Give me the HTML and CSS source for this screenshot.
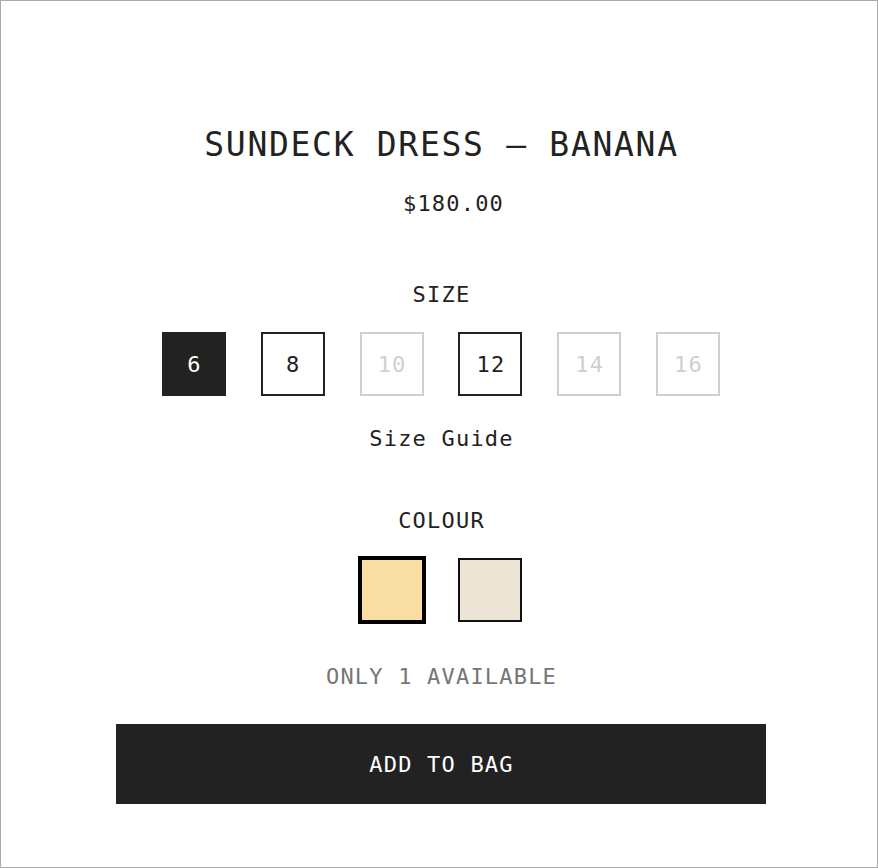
FILE: index.html
```html
<!DOCTYPE html>
<html lang="en">
<head>
<meta charset="utf-8">
<title>Sundeck Dress – Banana</title>
<link rel="stylesheet" href="styles.css">
</head>
<body>
<main class="product">
  <h1 class="title">SUNDECK DRESS – BANANA</h1>
  <p class="price">$180.00</p>

  <h2 class="label label-size">SIZE</h2>
  <div class="sizes">
    <button class="size is-selected">6</button>
    <button class="size">8</button>
    <button class="size is-disabled">10</button>
    <button class="size">12</button>
    <button class="size is-disabled">14</button>
    <button class="size is-disabled">16</button>
  </div>
  <a class="size-guide">Size Guide</a>

  <h2 class="label label-colour">COLOUR</h2>
  <div class="swatches">
    <button class="swatch swatch-banana is-selected" aria-label="Banana"></button>
    <button class="swatch swatch-sand" aria-label="Sand"></button>
  </div>

  <p class="stock">ONLY 1 AVAILABLE</p>
  <button class="add-to-bag">ADD TO BAG</button>
</main>
</body>
</html>
```
FILE: styles.css
```css
* { box-sizing: border-box; }

html, body { margin: 0; padding: 0; }

body {
  width: 878px;
  height: 868px;
  border: 1px solid #ababab;
  background: #fff;
  color: #222;
  font-family: "DejaVu Sans Mono", "Liberation Mono", monospace;
  font-size: 22px;
  line-height: 24px;
  letter-spacing: 1.2px;
}

.product {
  display: flex;
  flex-direction: column;
  align-items: center;
  padding: 126px 0 0 5px;
}

.title {
  margin: 0;
  font-size: 33px;
  line-height: 36px;
  font-weight: normal;
  letter-spacing: 1.7px;
}

.price {
  margin: 29px 0 0;
  padding-left: 24px;
}

.label {
  margin: 0;
  font-size: 22px;
  line-height: 24px;
  font-weight: normal;
}

.label-size { margin-top: 67px; }

.sizes {
  display: flex;
  gap: 34.8px;
  margin-top: 25px;
  margin-left: -1px;
}

.size {
  width: 64px;
  height: 64px;
  padding: 1px 0 0 1px;
  display: flex;
  align-items: center;
  justify-content: center;
  background: #fff;
  border: 2px solid #222;
  color: #222;
  font: inherit;
  letter-spacing: inherit;
  cursor: pointer;
}

.size.is-selected {
  background: #222;
  color: #fff;
}

.size.is-disabled {
  border-color: #cfcfcf;
  color: #cfcfcf;
}

.size-guide {
  margin-top: 31px;
  color: #222;
  text-decoration: none;
}

.label-colour { margin-top: 58px; }

.swatches {
  display: flex;
  gap: 34px;
  margin-top: 25px;
  margin-left: -1px;
}

.swatch {
  width: 64px;
  height: 64px;
  padding: 0;
  border: 2px solid #111;
  cursor: pointer;
}

.swatch.is-selected {
  outline: 2px solid #000;
  border-color: #000;
}

.swatch-banana { background: #f8dea2; }
.swatch-sand { background: #ece5d6; }

.stock {
  margin: 43px 0 0;
  color: #767676;
}

.add-to-bag {
  margin-top: 35px;
  margin-left: -1px;
  width: 650px;
  height: 80px;
  border: 0;
  padding: 2px 0 0 1px;
  background: #222;
  color: #fff;
  font: inherit;
  letter-spacing: inherit;
  cursor: pointer;
}
```
